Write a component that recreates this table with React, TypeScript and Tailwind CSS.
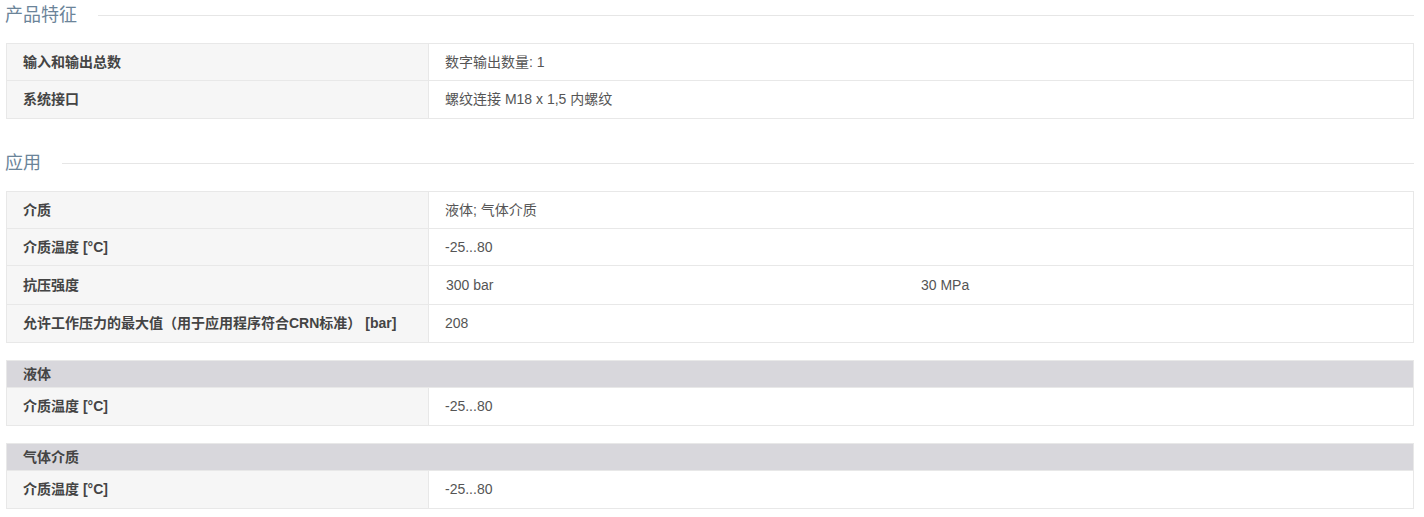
const font = "font-['Liberation_Sans','Noto_Sans_CJK_SC',sans-serif]"

type Row = { label: string; value: React.ReactNode; tall?: boolean }

function Heading({ title }: { title: string }) {
  return (
    <div className="flex items-center h-[30px]">
      <span className="text-[18px] text-[#6b8499] leading-none pl-[5px] pr-[21px] -mt-[1px]">{title}</span>
      <div className="flex-1 h-px bg-[#e6e6e6]" />
    </div>
  )
}

function Table({ header, rows }: { header?: string; rows: Row[] }) {
  return (
    <div className="border border-[#e8e8e8] text-[14px] ml-[6px]">
      {header && (
        <div className="h-[27px] bg-[#d8d7dc] flex items-center pl-[16px] font-bold text-[#444] border-b border-[#e8e8e8]">
          {header}
        </div>
      )}
      {rows.map((r, i) => (
        <div
          key={i}
          className={`flex ${r.tall ? "h-[39px]" : "h-[37px]"} ${
            i < rows.length - 1 ? "border-b border-[#e8e8e8]" : ""
          }`}
        >
          <div className="w-[422px] shrink-0 bg-[#f6f6f6] border-r border-[#e8e8e8] flex items-center pl-[16px] font-bold text-[#444]">
            {r.label}
          </div>
          <div className="flex-1 flex items-center pl-[16px] text-[#555]">{r.value}</div>
        </div>
      ))}
    </div>
  )
}

export default function App() {
  return (
    <div className={`${font} bg-white w-[1424px] h-[517px] pr-[10px] overflow-hidden`}>
      <Heading title="产品特征" />
      <div className="mt-[13px]">
        <Table
          rows={[
            { label: "输入和输出总数", value: "数字输出数量: 1" },
            { label: "系统接口", value: "螺纹连接 M18 x 1,5 内螺纹" },
          ]}
        />
      </div>

      <div className="mt-[29px]">
        <Heading title="应用" />
      </div>
      <div className="mt-[13px]">
        <Table
          rows={[
            { label: "介质", value: "液体; 气体介质" },
            { label: "介质温度 [°C]", value: "-25...80" },
            {
              label: "抗压强度",
              tall: true,
              value: (
                <div className="flex">
                  <div className="w-[476px] pl-px">300 bar</div>
                  <div>30 MPa</div>
                </div>
              ),
            },
            { label: "允许工作压力的最大值（用于应用程序符合CRN标准） [bar]", value: "208" },
          ]}
        />
      </div>

      <div className="mt-[17px]">
        <Table header="液体" rows={[{ label: "介质温度 [°C]", value: "-25...80" }]} />
      </div>
      <div className="mt-[17px]">
        <Table header="气体介质" rows={[{ label: "介质温度 [°C]", value: "-25...80" }]} />
      </div>
    </div>
  )
}
